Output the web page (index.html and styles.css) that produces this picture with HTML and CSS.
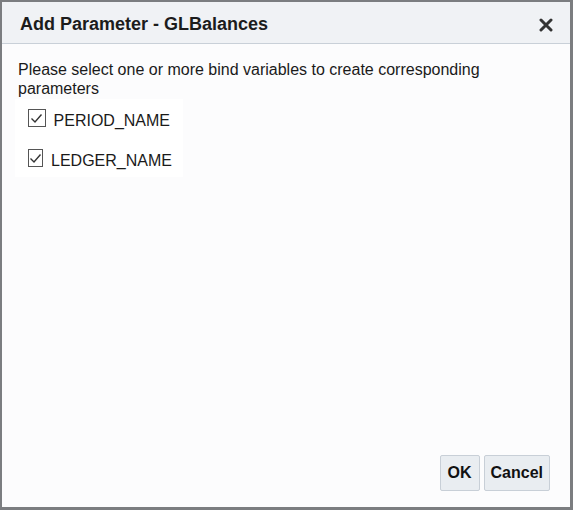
FILE: index.html
```html
<!DOCTYPE html>
<html lang="en">
<head>
    <meta charset="UTF-8">
    <title>Add Parameter - GLBalances</title>
    <link rel="stylesheet" href="styles.css">
</head>
<body>

    <div class="dialog">
        <!-- Title bar -->
        <div class="dialog-header">
            <h1>Add Parameter - GLBalances</h1>
            <button class="close-btn" title="Close">
                <svg width="14" height="14" viewBox="0 0 14 14">
                    <path d="M2 2 L12 12 M12 2 L2 12" stroke="#333" stroke-width="3" stroke-linecap="round"/>
                </svg>
            </button>
        </div>

        <div class="dialog-body">
            <p class="intro">Please select one or more bind variables to create corresponding parameters</p>

            <ul class="var-list">
                <li>
                    <span class="check">
                        <svg width="13" height="11" viewBox="0 0 13 11">
                            <path d="M1.5 5.5 L5 9 L11.5 1.5" fill="none" stroke="#333" stroke-width="1.4"/>
                        </svg>
                    </span>
                    <span class="label">PERIOD_NAME</span>
                </li>
                <li>
                    <span class="check">
                        <svg width="13" height="11" viewBox="0 0 13 11">
                            <path d="M1.5 5.5 L5 9 L11.5 1.5" fill="none" stroke="#333" stroke-width="1.4"/>
                        </svg>
                    </span>
                    <span class="label">LEDGER_NAME</span>
                </li>
            </ul>
        </div>

        <div class="dialog-footer">
            <button class="btn">OK</button>
            <button class="btn">Cancel</button>
        </div>
    </div>

</body>
</html>
```

FILE: styles.css
```css
html, body {
    margin: 0;
    padding: 0;
}
body {
    font-family: "Liberation Sans", Arial, sans-serif;
    color: #1a1a1a;
    background-color: #ffffff;
}

.dialog {
    box-sizing: border-box;
    width: 573px;
    height: 510px;
    border: 2px solid #7b7d80;
    border-right-width: 3px;
    border-bottom-width: 3px;
    background-color: #fcfcfd;
    display: flex;
    flex-direction: column;
}

/* Title bar */
.dialog-header {
    box-sizing: border-box;
    height: 42px;
    display: flex;
    align-items: center;
    justify-content: space-between;
    padding: 4px 18px 0 18px;
    background-color: #f0f2f5;
    border-bottom: 1px solid #c9d0d8;
}
.dialog-header h1 {
    margin: 0;
    font-size: 18px;
    font-weight: bold;
    color: #1c1c1c;
}
.close-btn {
    border: none;
    background: none;
    padding: 0;
    margin-right: -1px;
    width: 14px;
    height: 14px;
    cursor: pointer;
}

.dialog-body {
    flex: 1;
    padding: 16px 13px 0 13px;
}
.intro {
    margin: 0 0 0 3px;
    font-size: 16px;
    line-height: 19px;
    padding-right: 40px;
}

/* Bind variable list */
.var-list {
    list-style: none;
    margin: 1px 0 0 0;
    padding: 0 13px;
    width: 142px;
    background-color: #ffffff;
}
.var-list li {
    box-sizing: border-box;
    height: 40px;
    padding-top: 10px;
    display: flex;
    align-items: flex-start;
    font-size: 16px;
}
.var-list li:last-child {
    height: 38px;
}
.check {
    box-sizing: border-box;
    width: 18px;
    height: 18px;
    margin-right: 8px;
    border: 1px solid #555;
    display: flex;
    align-items: center;
    justify-content: center;
}
.label {
    line-height: 18px;
    margin-top: 3px;
}

/* Buttons */
.dialog-footer {
    display: flex;
    justify-content: flex-end;
    gap: 4px;
    padding: 0 20px 16px 0;
}
.btn {
    height: 36px;
    min-width: 40px;
    padding: 0 6px;
    font-family: "Liberation Sans", Arial, sans-serif;
    font-size: 16px;
    font-weight: bold;
    color: #111;
    background-color: #e9edf1;
    border: 1px solid #c8cfd7;
    border-radius: 2px;
    cursor: pointer;
}
```
